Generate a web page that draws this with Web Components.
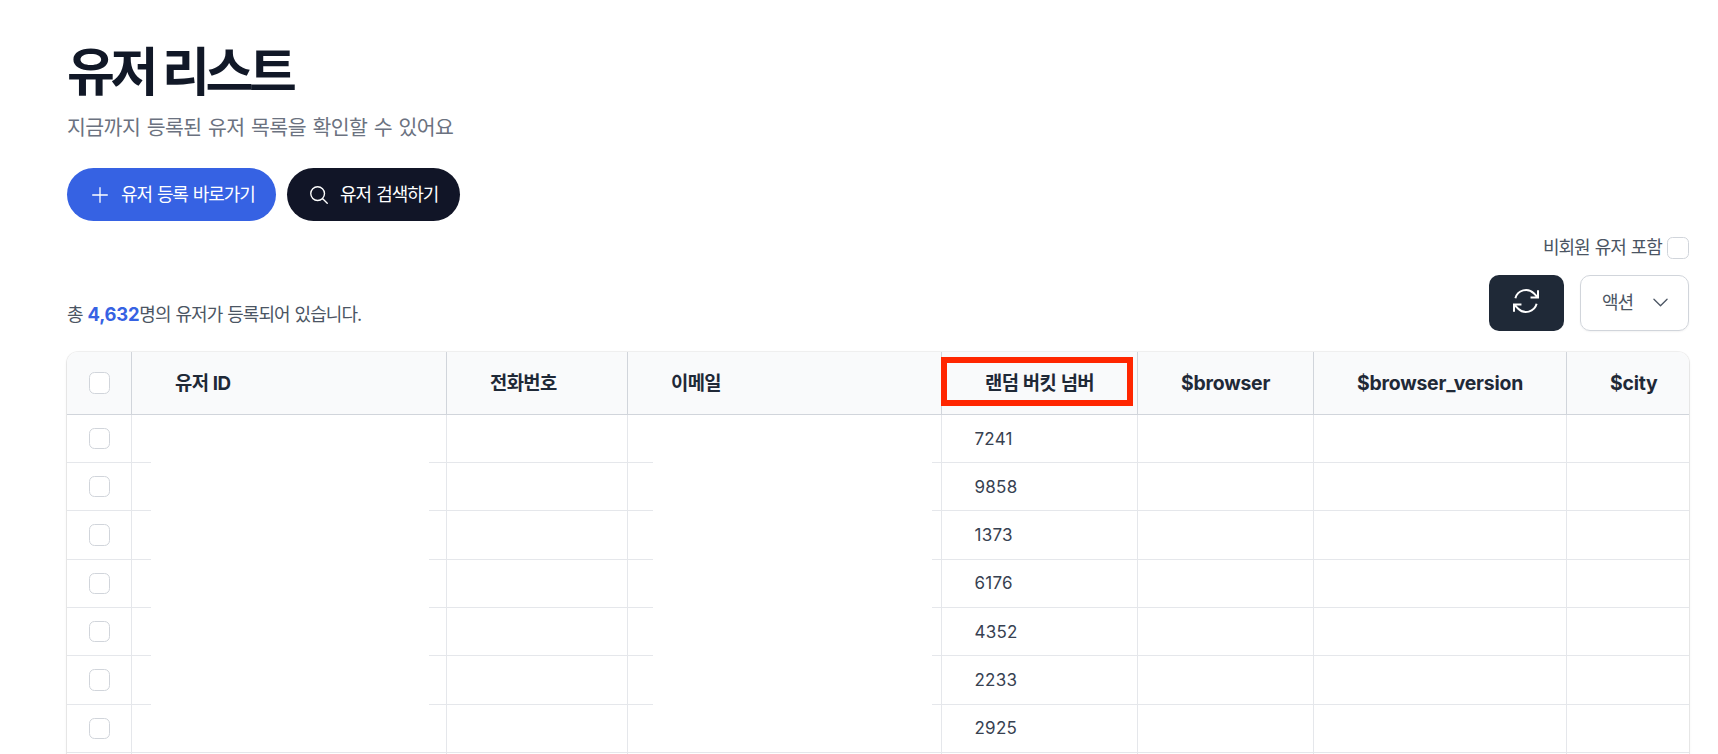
<!DOCTYPE html>
<html lang="ko">
<head>
<meta charset="utf-8">
<title>유저 리스트</title>
<style>
html,body{margin:0;background:#fff;overflow:hidden}
body{height:754px;font-family:Inter,"Noto Sans CJK KR",sans-serif;color:#4b5563}
</style>
</head>
<body>
<user-list-page></user-list-page>
<script>
const define = (name, css, html, setup) => customElements.define(name, class extends HTMLElement {
  connectedCallback() {
    if (this.shadowRoot) return;
    const root = this.attachShadow({ mode: 'open' });
    root.innerHTML = `<style>*,::after{box-sizing:border-box}${css}</style>${typeof html === 'function' ? html(this) : html}`;
    if (setup) setup(this, root);
  }
});

const ICONS = {
  plus: '<path d="M12 4v16m8-8h-16"/>',
  search: '<path d="m21 21-5.197-5.197m0 0A7.5 7.5 0 1 0 5.196 5.196a7.5 7.5 0 0 0 10.607 10.607Z"/>',
  refresh: '<path d="M15.4 9.348H21V3.9M3 20.1v-5.448H8.6M3.3 14.9l2.865 2.935a8.25 8.25 0 0 0 13.803-3.7M4.031 9.865a8.25 8.25 0 0 1 13.803-3.7L20.7 9.1"/>',
  down: '<path d="m19.5 8.25-7.5 7.5-7.5-7.5"/>'
};

define('app-icon', `
:host{display:block;flex:none}
svg{display:block;fill:none;stroke:currentColor;stroke-linecap:round;stroke-linejoin:round}
:host([name=refresh]) svg{stroke-linecap:butt;stroke-linejoin:miter}`,
  el => `<svg width="${el.getAttribute('size')}" height="${el.getAttribute('size')}" stroke-width="${el.getAttribute('weight') || 1.5}" viewBox="0 0 24 24">${ICONS[el.getAttribute('name')]}</svg>`);

define('check-box', `
:host{display:block;flex:none;box-sizing:border-box;width:21px;height:var(--check-height,21px);border:1px solid #d1d5db;border-radius:5.5px;background:#fff}
:host([large]){width:22px;height:22px}
:host([tall]){height:22px}`, '');

define('pill-button', `
:host{display:flex;align-items:center;box-sizing:border-box;height:53px;border-radius:27px;color:#fff;
  font-size:18px;line-height:28px;letter-spacing:-1.1px;word-spacing:1px;white-space:nowrap;background:#3662e3}
:host([dark]){background:#111527}`, '<slot></slot>');

define('page-header', `
:host{display:block}
h1{margin:0;font-size:52px;line-height:60px;font-weight:700;letter-spacing:-4.4px;word-spacing:.3px;color:#111827}
p{margin:10px 0 0;font-size:20.5px;line-height:30px;letter-spacing:-.55px;word-spacing:1.2px;color:#6b7280}
nav{display:flex;gap:11px;margin-top:25px}
.add{width:209px;padding-left:22px;gap:10px}
.find{width:173px;padding-left:21px;gap:10px;letter-spacing:-1px}`, `
<h1>유저 리스트</h1>
<p>지금까지 등록된 유저 목록을 확인할 수 있어요</p>
<nav>
<pill-button class="add"><app-icon name="plus" size="22" weight="1.4"></app-icon><span>유저 등록 바로가기</span></pill-button>
<pill-button class="find" dark><app-icon name="search" size="22"></app-icon><span>유저 검색하기</span></pill-button>
</nav>`);

define('list-toolbar', `
:host{display:flex;justify-content:space-between;align-items:flex-end;font-size:18px;line-height:28px;letter-spacing:-.95px;word-spacing:.8px;white-space:nowrap}
.total{margin-bottom:2px}
b{color:#3662e3;font-weight:700;letter-spacing:-.2px;font-size:18.4px}
.side{display:flex;flex-direction:column;align-items:flex-end;gap:16px}
.guest{display:flex;align-items:center;gap:5px;height:22px}
.buttons{display:flex;gap:16px}
.refresh{display:grid;place-items:center;width:75px;height:56px;border-radius:10px;background:#1f2937;color:#fff;padding:0 1px 4px 0}
.action{display:flex;align-items:center;justify-content:space-between;width:109px;height:56px;padding:0 17px 1px 21px;border:1px solid #d1d5db;border-radius:10px;box-shadow:0 1px 2px #0000000d}`, `
<div class="total">총 <b>4,632</b>명의 유저가 등록되어 있습니다.</div>
<div class="side">
<div class="guest"><span>비회원 유저 포함</span><check-box large></check-box></div>
<div class="buttons"><div class="refresh"><app-icon name="refresh" size="32"></app-icon></div>
<div class="action"><span>액션</span><app-icon name="down" size="21"></app-icon></div></div>
</div>`);

const COLUMNS = 'grid-template-columns:65px 315px 181px 314px 196px 176px 253px 122px';

define('table-head', `
:host{display:grid;${COLUMNS};height:63px;background:#f9fafb;border-bottom:1px solid #d1d5db;box-sizing:border-box;
  color:#1f2937;font-size:19.4px;line-height:28px;font-weight:700;letter-spacing:-.2px}
div{display:flex;align-items:center;padding-left:43px;border-right:1px solid #d1d5db;position:relative;white-space:nowrap}
div:first-of-type{padding:0 0 0 22px}
div:last-of-type{border:0}
.ko{letter-spacing:-.65px;word-spacing:.8px;font-size:18.8px;padding-top:2px}
.mark::after{content:"";position:absolute;left:-1px;top:5px;width:192px;height:49px;border:6px solid #ff2600}`, `
<div><check-box tall></check-box></div><div class="ko">유저 ID</div><div class="ko">전화번호</div><div class="ko">이메일</div>
<div class="ko mark">랜덤 버킷 넘버</div><div>$browser</div><div>$browser_version</div><div>$city</div>`);

define('table-row', `
:host{display:grid;${COLUMNS};font-size:17px;line-height:24px;letter-spacing:.25px;color:#374151}
div{padding:var(--text-top,12px) 0 0 32.5px;border-right:1px solid #e5e7eb;
  background:linear-gradient(#e5e7eb,#e5e7eb) left bottom/100% 1px no-repeat}
div:first-of-type{padding:13px 0 0 22px}
div:last-of-type{border-right:0}
:host(:not([last])) .id{background:linear-gradient(90deg,#e5e7eb 19px,#fff 19px,#fff 297px,#e5e7eb 297px) left bottom/100% 1px no-repeat}
:host(:not([last])) .mail{background:linear-gradient(90deg,#e5e7eb 25px,#fff 25px,#fff 304px,#e5e7eb 304px) left bottom/100% 1px no-repeat}`, `
<div><check-box></check-box></div><div class="id"></div><div></div><div class="mail"></div>
<div><slot></slot></div><div></div><div></div><div></div>`);

define('user-table', `
:host{display:block;border-radius:11px 11px 0 0;overflow:hidden;height:403px}
section{display:block}`, '<section></section>', (el, root) => {
  const heights = [48, 48, 49, 48, 48, 49, 48];
  root.querySelector('section').innerHTML = '<table-head></table-head>' +
    [7241, 9858, 1373, 6176, 4352, 2233, 2925].map((n, i) =>
      `<table-row style="height:${heights[i]}px${i && i % 3 === 0 ? ';--text-top:11px' : ''}${heights[i] === 49 ? ';--check-height:22px' : ''}"${i === 6 ? ' last' : ''}>${n}</table-row>`).join('') +
    '<table-row style="height:49px"></table-row>';
});

define('user-list-page', `
:host{display:block;padding:43px 29px 0 67px;height:754px;overflow:hidden;box-sizing:border-box}
list-toolbar{margin-top:16px}
user-table{margin-top:21px;box-shadow:0 0 0 1px #0000000d,0 1px 3px #0000001a,0 1px 2px #0000000f}`, `
<page-header></page-header><list-toolbar></list-toolbar><user-table></user-table>`);
</script>
</body>
</html>
